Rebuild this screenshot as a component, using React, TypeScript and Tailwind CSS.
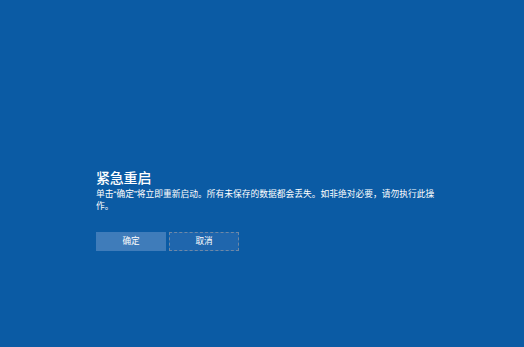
import React from "react";

export default function App() {
  return (
    <div
      className="w-[524px] h-[347px] bg-[#0b5ba4] text-white overflow-hidden"
      style={{ fontFamily: '"Liberation Sans", "Noto Sans CJK SC", sans-serif' }}
    >
      <div className="pl-[96px] pt-[169px]">
        <div className="text-[14px] leading-[19px] tracking-[-0.2px] font-medium">紧急重启</div>
        <div className="w-[346px] text-[8.75px] leading-[11.5px] mt-[1px]">
          单击“确定”将立即重新启动。所有未保存的数据都会丢失。如非绝对必要，请勿执行此操作。
        </div>
        <div className="flex gap-[3px] mt-[20px]">
          <div className="w-[70px] h-[19px] bg-[#3f7cba] flex items-center justify-center text-[8.6px]">
            确定
          </div>
          <div className="w-[70px] h-[19px] bg-[#1f66ad] border border-dashed border-[#6f88a6] flex items-center justify-center text-[8.6px]">
            取消
          </div>
        </div>
      </div>
    </div>
  );
}
